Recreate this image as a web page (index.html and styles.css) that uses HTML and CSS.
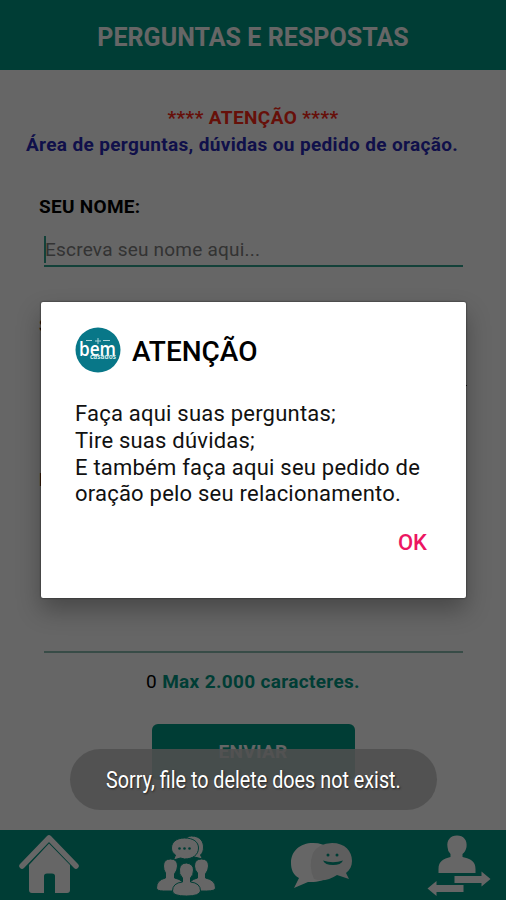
FILE: index.html
```html
<!DOCTYPE html>
<html lang="pt-BR">
<head>
	<title>Perguntas e Respostas</title>
	<meta charset="utf-8">
	<link rel="stylesheet" href="styles.css">
</head>
<body>
	<div class="screen">
		<header class="topbar">
			<h1>PERGUNTAS E RESPOSTAS</h1>
		</header>

		<!--Question form-->
		<main class="content">
			<p class="notice">**** ATENÇÃO ****</p>
			<p class="subtitle">Área de perguntas, dúvidas ou pedido de oração.</p>
			<div class="label name-label">SEU NOME:</div>
			<div class="field name-field"><span class="caret"></span><span class="hint">Escreva seu nome aqui...</span></div>
			<div class="label email-label">SEU E-MAIL:</div>
			<div class="field email-field"></div>
			<div class="label message-label">MENSAGEM:</div>
			<div class="field message-field"></div>
			<p class="counter"><span class="count">0</span> <b>Max 2.000 caracteres.</b></p>
			<button class="send">ENVIAR</button>
		</main>

		<!--Bottom navigation-->
		<nav class="tabs">
			<svg class="tab" viewBox="0 0 126.500 70">
				<path d="M22 36 L49 8 L76 36" fill="none" stroke="#fff" stroke-width="5.500" stroke-linecap="round" stroke-linejoin="round"/>
				<path d="M49 13.500 L70 35 V60 Q70 63 67 63 H55 V46 Q55 43.500 52 43.500 H47 Q44 43.500 44 46 V63 H32 Q29 63 29 60 V35 Z" fill="#fff"/>
			</svg>
			<svg class="tab" viewBox="126.500 0 126.500 70">
				<g fill="#fff" stroke="#009984">
					<path d="M191 6 C200 6 203 12 203 17 C203 21 202 23 200 25 L202 29 L194 27 C185 27 182 22 182 17 C182 11 186 6 191 6 Z"/>
					<path d="M184 8 C193 8 198 12 198 18 C198 25 192 29 184 29 L180 28 L173 30 L175 25 C172 23 171 21 171 18 C171 12 176 8 184 8 Z"/>
					<path d="M165 48 L165 43 Q163 40 163 36 Q163 29 170 29 Q177 29 177 36 Q177 40 174 44 L174 48 Q184 50 185 58 Q185 61 176 61 L163 61 Q156 61 156 58 Q156 50 165 48 Z"/>
					<path d="M197 48 L197 43 Q194 40 194 36 Q194 29 201 29 Q208 29 208 36 Q208 40 205 44 L205 48 Q215 50 215 58 Q215 61 206 61 L195 61 L187 58 Q188 50 197 48 Z"/>
					<path d="M182 52 L182 48 Q178 44 179 39 Q180 33 186 33 Q193 34 193 40 Q193 45 190 48 L190 52 Q200 53 200 61 Q199 66 186 66 Q172 66 172 61 Q172 53 182 52 Z"/>
				</g>
				<g fill="#009984"><circle cx="179" cy="18.500" r="1.300"/><circle cx="184" cy="18.500" r="1.300"/><circle cx="189" cy="18.500" r="1.300"/></g>
			</svg>
			<svg class="tab" viewBox="253 0 126.500 70">
				<path d="M313 13 C327 13 335 21 335 32 C335 45 325 53 308 52 L294 58 L299 48 C293 45 291 39 291 33 C291 21 300 13 313 13 Z" fill="#fff"/>
				<path d="M332 13 C345 13 352 21 352 31 C352 36 350 40 346 43 L349 49 L337 45 Q325 53 314 49 Q308 36 313 23 Q319 13 332 13 Z" fill="#eaeaea"/>
				<g fill="#009984"><circle cx="328" cy="25" r="1.500"/><circle cx="337" cy="25" r="1.500"/>
				<path d="M323 30.500 Q333 34 343 30.500 Q341 35 333 35 Q325 35 323 30.500 Z"/></g>
			</svg>
			<svg class="tab" viewBox="379.500 0 126.500 70">
				<g fill="#fff">
					<path d="M438 43 V39 C438 31 443 29 450 27 V24 Q447 21 447 17 C446 10 450 5.500 456.500 5.500 C463 5.500 467 10 466 17 Q465 22 462 24 V27 C470 29 475 31 475 39 V43 Z"/>
					<path d="M454 46 H481 V41.500 L490 49 L481 56.500 V53 H454 Z"/>
					<path d="M463 55 H436 V51 L427 58.500 L436 66 V62 H463 Z"/>
				</g>
			</svg>
		</nav>
	</div>

	<div class="scrim"></div>

	<!--Alert dialog-->
	<div class="dialog">
		<div class="dialog-head">
			<svg class="logo" viewBox="0 0 46 46">
				<circle cx="23" cy="23" r="22.500" fill="#087788"/>
				<text class="logo-name" x="4" y="29" textLength="37" lengthAdjust="spacingAndGlyphs">bem</text>
				<path d="M11 13.500 H17 M28 13.500 H35 M20 14 H26 M23 11 V17" fill="none" stroke="#a8d4d8" stroke-width="1"/>
				<text class="logo-sub" x="15" y="32" textLength="26" lengthAdjust="spacingAndGlyphs">casados</text>
			</svg>
			<h2>ATENÇÃO</h2>
		</div>
		<p class="dialog-text">Faça aqui suas perguntas;<br>Tire suas dúvidas;<br>E também faça aqui seu pedido de<br>oração pelo seu relacionamento.</p>
		<button class="ok">OK</button>
	</div>

	<div class="toast"><span>Sorry, file to delete does not exist.</span></div>
</body>
</html>
```
FILE: styles.css
```css
*{
	box-sizing: border-box;
}

body{
	margin: 0;
	width: 506px;
	height: 900px;
	overflow: hidden;
	font-family: Roboto, sans-serif;
	color: #000;
}

h1, h2, p{
	margin: 0;
}

button{
	border: none;
	padding: 0;
	font-family: inherit;
}

.screen{
	height: 900px;
	display: flex;
	flex-direction: column;
	background: #fff;
}

.topbar{
	height: 70px;
	padding-top: 5px;
	display: flex;
	align-items: center;
	justify-content: center;
	background: #009984;
}

.topbar h1{
	font-size: 25px;
	line-height: 30px;
	letter-spacing: .05px;
	color: #fff;
	white-space: nowrap;
}

.content{
	flex: 1;
	display: flex;
	flex-direction: column;
	padding: 34px 39px 0;
}

.notice, .subtitle{
	font-size: 19px;
	font-weight: bold;
	line-height: 27px;
	letter-spacing: .35px;
	text-align: center;
	white-space: nowrap;
}

.notice{
	color: #ff2818;
	letter-spacing: .4px;
}

.subtitle{
	margin-left: -13px;
	text-align: left;
	color: #2828b8;
}

.label{
	height: 24px;
	font-size: 19px;
	font-weight: bold;
	line-height: 24px;
	letter-spacing: .3px;
}

.name-label{
	margin-top: 37px;
}

.field{
	margin: 0 4px 0 5px;
	border-bottom: 1px solid #8cbfb2;
}

.name-field{
	display: flex;
	align-items: center;
	height: 48px;
	padding-top: 14px;
	border-bottom: 2px solid #30a48f;
}

.caret{
	width: 2px;
	height: 27px;
	background: #30a48f;
}

.hint{
	font-size: 19px;
	letter-spacing: .22px;
	color: #808080;
	margin-left: -1px;
}

.email-label{
	margin-top: 47px;
}

.email-field{
	height: 48px;
	margin-right: 0;
	border-color: #000;
}

.message-label{
	margin-top: 82px;
}

.message-field{
	height: 161px;
	border-bottom-width: 2px;
}

.counter{
	margin-top: 16px;
	font-size: 19px;
	line-height: 26px;
	letter-spacing: .33px;
	text-align: center;
}

.counter b{
	color: #009984;
}

.send{
	width: 203px;
	height: 56px;
	margin: 29px auto 0;
	padding-bottom: 2px;
	border-radius: 6px;
	background: #009984;
	color: #fff;
	font-size: 19px;
	font-weight: bold;
	letter-spacing: .3px;
}

.tabs{
	display: flex;
	height: 70px;
	background: #009984;
}

.tab{
	width: 126.5px;
	height: 70px;
}

.scrim{
	position: absolute;
	inset: 0;
	height: 900px;
	background: rgba(0,0,0,.6);
}

.dialog{
	position: absolute;
	left: 41px;
	top: 302px;
	width: 425px;
	height: 296px;
	padding: 25px 34px 0;
	display: flex;
	flex-direction: column;
	border-radius: 2px;
	background: #fff;
	box-shadow: 0 0 2px #181818, 0 12px 24px rgba(0,0,0,.3);
}

.dialog-head{
	display: flex;
	align-items: center;
	gap: 11px;
}

.logo{
	width: 46px;
	height: 46px;
}

.logo-name{
	font: 600 19px "Open Sans", sans-serif;
	fill: #fff;
}

.logo-sub{
	font: bold 6.5px "Open Sans", sans-serif;
	fill: #d4eeee;
}

.dialog h2{
	padding-top: 3px;
	font-size: 28px;
	font-weight: 500;
	line-height: 32px;
}

.dialog-text{
	margin-top: 28px;
	font-size: 22px;
	line-height: 26.8px;
	letter-spacing: .22px;
	white-space: nowrap;
	color: #111;
}

.ok{
	align-self: flex-end;
	margin: 21px 5px 0 0;
	background: none;
	color: #ec1562;
	font-size: 22px;
	font-weight: 500;
	line-height: 28px;
}

.toast{
	position: absolute;
	left: 70px;
	top: 749px;
	width: 367px;
	height: 61px;
	padding-top: 1px;
	display: flex;
	align-items: center;
	justify-content: center;
	border-radius: 31px;
	background: rgba(80,80,80,.88);
	color: #fff;
	font-size: 23px;
	white-space: nowrap;
	text-shadow: 1px 1px 2px #222;
}

.toast span{
	transform: scaleX(.86);
}
```
